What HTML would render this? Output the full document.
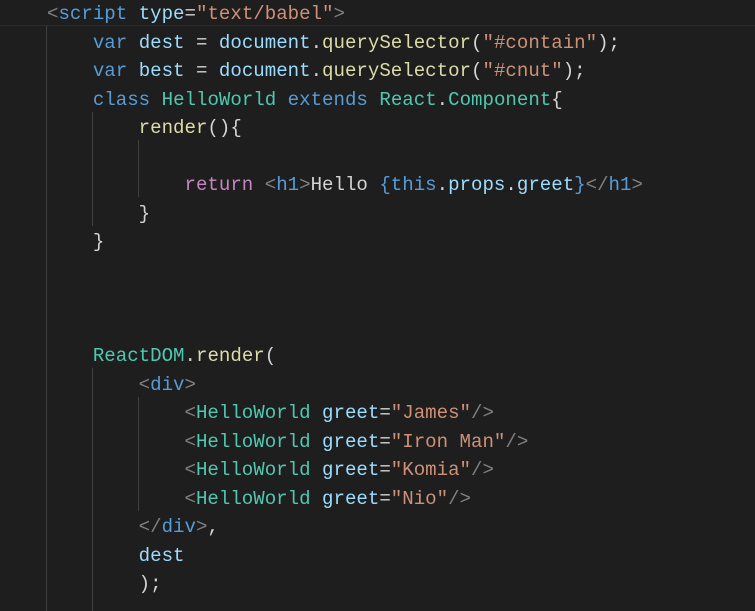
<!DOCTYPE html>
<html><head><meta charset="utf-8"><style>
html,body{margin:0;padding:0;background:#1e1e1e;width:755px;height:611px;overflow:hidden}
.c{position:absolute;left:0;top:0px;font-family:"Liberation Mono",monospace;font-size:19.1px;line-height:28.5px;color:#d4d4d4}
.l{height:28.5px;padding-left:47px;white-space:pre}
.g{position:absolute;width:1px;background:#404040}
.hl{position:absolute;left:0;top:-2px;width:755px;height:27px;border-bottom:1px solid #2a2a2a}
.p{color:#808080}.t{color:#569cd6}.a{color:#9cdcfe}.s{color:#ce9178}.f{color:#dcdcaa}.k{color:#4ec9b0}.r{color:#c586c0}
</style></head><body>
<div class="hl"></div>
<div class="g" style="left:46px;top:26px;height:585px"></div>
<div class="g" style="left:92px;top:112px;height:114px"></div>
<div class="g" style="left:138px;top:140px;height:57px"></div>
<div class="g" style="left:92px;top:368px;height:243px"></div>
<div class="g" style="left:138px;top:397px;height:114px"></div>
<div class="c">
<div class="l"><span class="p">&lt;</span><span class="t">script</span> <span class="a">type</span>=<span class="s">"text/babel"</span><span class="p">&gt;</span></div>
<div class="l">    <span class="t">var</span> <span class="a">dest</span> = <span class="a">document</span>.<span class="f">querySelector</span>(<span class="s">"#contain"</span>);</div>
<div class="l">    <span class="t">var</span> <span class="a">best</span> = <span class="a">document</span>.<span class="f">querySelector</span>(<span class="s">"#cnut"</span>);</div>
<div class="l">    <span class="t">class</span> <span class="k">HelloWorld</span> <span class="t">extends</span> <span class="k">React</span>.<span class="k">Component</span>{</div>
<div class="l">        <span class="f">render</span>(){</div>
<div class="l"> </div>
<div class="l">            <span class="r">return</span> <span class="p">&lt;</span><span class="t">h1</span><span class="p">&gt;</span>Hello <span class="t">{this</span>.<span class="a">props</span>.<span class="a">greet</span><span class="t">}</span><span class="p">&lt;/</span><span class="t">h1</span><span class="p">&gt;</span></div>
<div class="l">        }</div>
<div class="l">    }</div>
<div class="l"> </div>
<div class="l"> </div>
<div class="l"> </div>
<div class="l">    <span class="k">ReactDOM</span>.<span class="f">render</span>(</div>
<div class="l">        <span class="p">&lt;</span><span class="t">div</span><span class="p">&gt;</span></div>
<div class="l">            <span class="p">&lt;</span><span class="k">HelloWorld</span> <span class="a">greet</span>=<span class="s">"James"</span><span class="p">/&gt;</span></div>
<div class="l">            <span class="p">&lt;</span><span class="k">HelloWorld</span> <span class="a">greet</span>=<span class="s">"Iron Man"</span><span class="p">/&gt;</span></div>
<div class="l">            <span class="p">&lt;</span><span class="k">HelloWorld</span> <span class="a">greet</span>=<span class="s">"Komia"</span><span class="p">/&gt;</span></div>
<div class="l">            <span class="p">&lt;</span><span class="k">HelloWorld</span> <span class="a">greet</span>=<span class="s">"Nio"</span><span class="p">/&gt;</span></div>
<div class="l">        <span class="p">&lt;/</span><span class="t">div</span><span class="p">&gt;</span>,</div>
<div class="l">        <span class="a">dest</span></div>
<div class="l">        );</div>
</div>
</body></html>
